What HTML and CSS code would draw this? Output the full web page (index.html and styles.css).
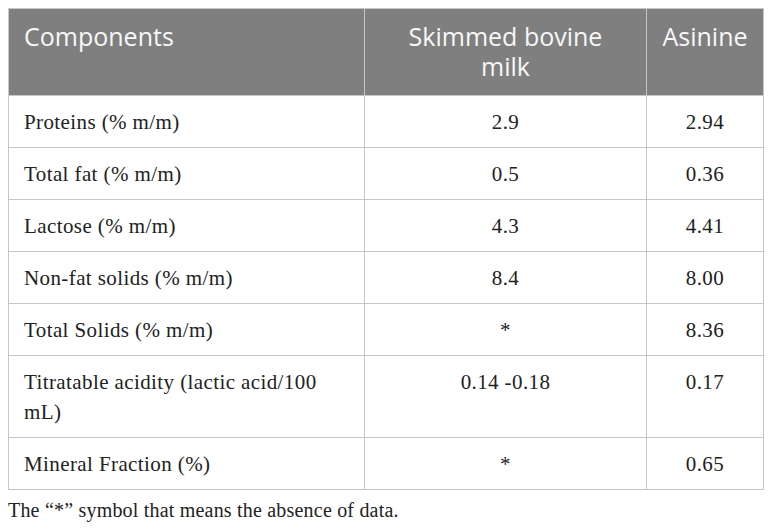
FILE: index.html
```html
<!DOCTYPE html>
<html lang="en">

<head>
  <meta charset="UTF-8">
  <meta name="viewport" content="width=device-width, initial-scale=1.0">
  <title>Milk composition</title>
  <link rel="stylesheet" href="styles.css">
</head>

<body>
  <table class="milk-table">
    <colgroup>
      <col class="col-name">
      <col class="col-bovine">
      <col class="col-asinine">
    </colgroup>
    <thead>
      <tr>
        <th class="left">Components</th>
        <th class="narrow">Skimmed bovine milk</th>
        <th>Asinine</th>
      </tr>
    </thead>
    <tbody>
      <tr>
        <td class="left">Proteins (% m/m)</td>
        <td>2.9</td>
        <td>2.94</td>
      </tr>
      <tr>
        <td class="left">Total fat (% m/m)</td>
        <td>0.5</td>
        <td>0.36</td>
      </tr>
      <tr>
        <td class="left">Lactose (% m/m)</td>
        <td>4.3</td>
        <td>4.41</td>
      </tr>
      <tr>
        <td class="left">Non-fat solids (% m/m)</td>
        <td>8.4</td>
        <td>8.00</td>
      </tr>
      <tr>
        <td class="left">Total Solids (% m/m)</td>
        <td>*</td>
        <td>8.36</td>
      </tr>
      <tr>
        <td class="left">Titratable acidity (lactic acid/100 mL)</td>
        <td>0.14 -0.18</td>
        <td>0.17</td>
      </tr>
      <tr>
        <td class="left">Mineral Fraction (%)</td>
        <td>*</td>
        <td>0.65</td>
      </tr>
    </tbody>
  </table>
  <p class="note">The &ldquo;*&rdquo; symbol that means the absence of data.</p>
</body>

</html>
```

FILE: styles.css
```css
* {
  box-sizing: border-box;
}

body {
  margin: 8px;
  background-color: white;
  color: #222;
  font-family: "Liberation Serif", "Times New Roman", serif;
}

.milk-table {
  width: 755px;
  border-collapse: collapse;
  table-layout: fixed;
  font-size: 21px;
}

.col-name {
  width: 356px;
}

.col-bovine {
  width: 282px;
}

.col-asinine {
  width: 117px;
}

th,
td {
  border: solid 1px #c6c6c6;
  text-align: center;
}

th {
  background-color: #7f7f7f;
  color: #f7f7f7;
  font-family: "Open Sans", "Liberation Sans", sans-serif;
  font-weight: normal;
  font-size: 25px;
  line-height: 30px;
  vertical-align: top;
  padding: 12px 10px 14px;
}

th.left {
  padding-left: 15px;
}

th.narrow {
  padding: 12px 24px 14px;
}

td {
  line-height: 30px;
  vertical-align: top;
  padding: 11px 15px 10px;
  letter-spacing: 0.4px;
}

.left {
  text-align: left;
}

.note {
  margin: 5px 0 0;
  font-size: 20px;
  line-height: 30px;
  letter-spacing: 0.2px;
}
```
